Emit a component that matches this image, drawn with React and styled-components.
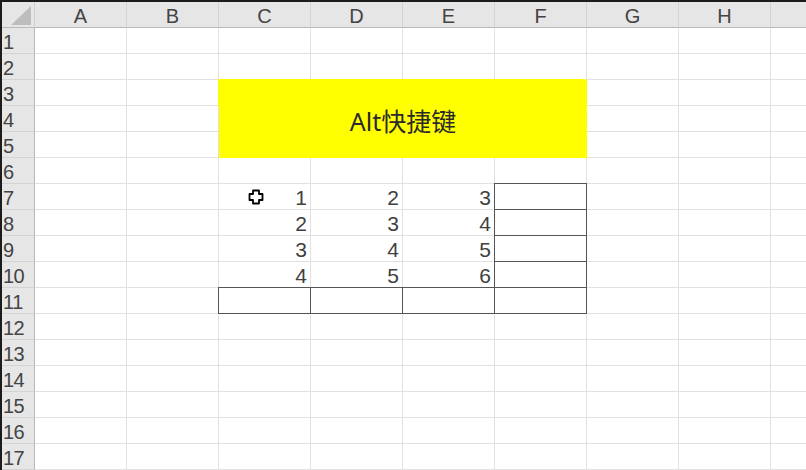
import React from 'react';
import styled, { createGlobalStyle } from 'styled-components';

const GlobalStyle = createGlobalStyle`
  html, body {
    margin: 0;
    padding: 0;
    background: #ffffff;
    overflow: hidden;
  }
`;

const Frame = styled.div`
  width: 806px;
  height: 470px;
  box-sizing: border-box;
  border-top: 2px solid #1c1c1c;
  border-left: 2px solid #1c1c1c;
  overflow: hidden;
  background: #ffffff;
`;

const Sheet = styled.div`
  display: grid;
  grid-template-columns: 33px repeat(9, 92px);
  grid-template-rows: 26px;
  grid-auto-rows: 26px;
  font-family: 'Liberation Sans', 'Noto Sans CJK SC', sans-serif;
`;

const Corner = styled.div`
  position: relative;
  box-sizing: border-box;
  background: #e6e6e6;
  border-right: 1px solid #d0d0d0;
  border-bottom: 1px solid #b9b9b9;

  svg {
    position: absolute;
    right: 3px;
    bottom: 2px;
  }
`;

const ColHead = styled.div`
  box-sizing: border-box;
  background: #e6e6e6;
  border-right: 1px solid #d3d3d3;
  border-bottom: 1px solid #b9b9b9;
  color: #444444;
  font-size: 20px;
  line-height: 26px;
  text-align: center;
  padding-top: 1px;
`;

const RowHead = styled.div`
  box-sizing: border-box;
  background: #e6e6e6;
  border-right: 1px solid #b9b9b9;
  border-bottom: 1px solid #d3d3d3;
  color: #444444;
  font-size: 20px;
  line-height: 28px;
  padding-left: 1px;
  letter-spacing: -0.5px;
`;

const Cell = styled.div`
  position: relative;
  box-sizing: border-box;
  border-right: 1px solid #e1e1e1;
  border-bottom: 1px solid #e1e1e1;
  color: #404040;
  font-size: 21px;
  line-height: 28px;
  text-align: right;
  padding-right: 3px;

  ${({ $boxed }) =>
    $boxed &&
    `
    &::after {
      content: '';
      position: absolute;
      top: -1px;
      left: -1px;
      right: -1px;
      bottom: -1px;
      border: 1px solid #555555;
      z-index: 1;
      pointer-events: none;
    }
  `}
`;

const Merged = styled.div`
  position: relative;
  grid-column: 4 / span 4;
  grid-row: 4 / span 3;
  display: flex;
  align-items: center;
  justify-content: center;
  background: #ffff00;
  box-shadow: -1px -1px 0 #ffff00;
  color: #2a2a2a;
  font-family: 'Noto Sans', 'Noto Sans CJK SC', sans-serif;
  font-size: 25px;
  padding-top: 2px;
  box-sizing: border-box;
`;

const Cursor = styled.svg`
  position: absolute;
  left: 29px;
  top: 5px;
  z-index: 2;
`;

const COLS = ['A', 'B', 'C', 'D', 'E', 'F', 'G', 'H', 'I'];
const ROWS = Array.from({ length: 17 }, (_, i) => i + 1);

const values = {
  7: { C: 1, D: 2, E: 3 },
  8: { C: 2, D: 3, E: 4 },
  9: { C: 3, D: 4, E: 5 },
  10: { C: 4, D: 5, E: 6 },
};

const isBoxed = (row, col) =>
  (col === 'F' && row >= 7 && row <= 10) ||
  (row === 11 && ['C', 'D', 'E', 'F'].includes(col));

const inMerge = (row, col) => row >= 3 && row <= 5 && ['C', 'D', 'E', 'F'].includes(col);

const PlusCursor = () => (
  <Cursor width="16" height="16" viewBox="0 0 16 16">
    <path
      d="M5 1.5 H11 V5 H14.5 V11 H11 V14.5 H5 V11 H1.5 V5 H5 Z"
      fill="#ffffff"
      stroke="#000000"
      strokeWidth="1.8"
      strokeLinejoin="round"
    />
  </Cursor>
);

const App = () => {
  return (
    <>
      <GlobalStyle />
      <Frame>
        <Sheet>
          <Corner>
            <svg width="20" height="19" viewBox="0 0 20 19">
              <polygon points="0,19 20,19 20,0" fill="#bdbdbd" />
            </svg>
          </Corner>
          {COLS.map((c) => (
            <ColHead key={c}>{c === 'I' ? '' : c}</ColHead>
          ))}

          {ROWS.map((r) => (
            <React.Fragment key={r}>
              <RowHead>{r}</RowHead>
              {COLS.map((c) => {
                if (inMerge(r, c)) {
                  return r === 3 && c === 'C' ? <Merged key={c}>Alt快捷键</Merged> : null;
                }
                const v = values[r] && values[r][c];
                return (
                  <Cell key={c} $boxed={isBoxed(r, c)}>
                    {r === 7 && c === 'C' && <PlusCursor />}
                    {v}
                  </Cell>
                );
              })}
            </React.Fragment>
          ))}
        </Sheet>
      </Frame>
    </>
  );
};

export default App;
